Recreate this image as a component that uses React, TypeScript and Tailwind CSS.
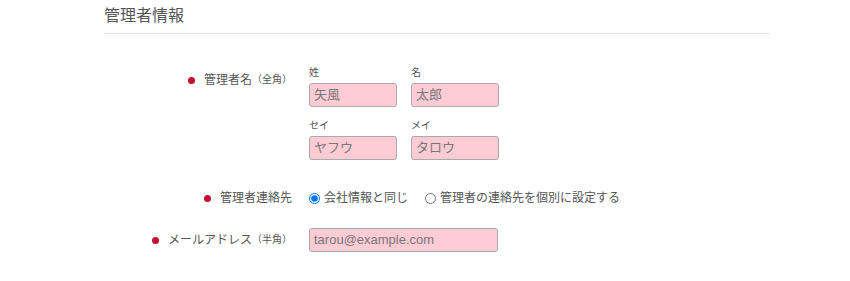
import React from "react";

const jp = "font-['Liberation_Sans','Noto_Sans_CJK_JP',sans-serif]";

const Bullet = () => (
  <span className="inline-block w-[7px] h-[7px] rounded-full bg-[#c8102e] mr-[9px] shrink-0" />
);

const Label = ({ text, note }: { text: string; note?: string }) => (
  <div className="flex items-center justify-end text-[12px] leading-[20px] text-[#555]">
    <Bullet />
    <span>{text}</span>
    {note && <span className="text-[10px] text-[#555]">{note}</span>}
  </div>
);

const Field = ({ sub, value, width = "w-[88px]" }: { sub: string; value: string; width?: string }) => (
  <div className="flex flex-col">
    <span className="text-[10px] leading-[14px] text-[#555] mb-[3px]">{sub}</span>
    <div
      className={`${width} h-[24px] rounded-[3px] border border-[#aaa] bg-[#ffccd5] px-[4px] text-[13px] leading-[22px] text-[#777]`}
    >
      {value}
    </div>
  </div>
);

export default function App() {
  return (
    <div className={`${jp} bg-white w-[850px] h-[281px] pl-[104px] pr-[80px] pt-[4px]`}>
      <h2 className="text-[16px] leading-[24px] text-[#555] pb-[5px] border-b border-[#e0e0e0]">
        管理者情報
      </h2>

      <div className="grid grid-cols-[188px_1fr] gap-x-[17px] mt-[32px]">
        <div className="pt-[4px]">
          <Label text="管理者名" note="（全角）" />
        </div>
        <div className="flex flex-col gap-[12px]">
          <div className="flex gap-[14px]">
            <Field sub="姓" value="矢風" />
            <Field sub="名" value="太郎" />
          </div>
          <div className="flex gap-[14px]">
            <Field sub="セイ" value="ヤフウ" />
            <Field sub="メイ" value="タロウ" />
          </div>
        </div>
      </div>

      <div className="grid grid-cols-[188px_1fr] gap-x-[17px] mt-[28px] items-center">
        <Label text="管理者連絡先" />
        <div className="flex items-center text-[12px] leading-[20px] text-[#555]">
          <label className="flex items-center">
            <input type="radio" name="contact" defaultChecked className="m-0 w-[11px] h-[11px]" />
            <span className="ml-[4px]">会社情報と同じ</span>
          </label>
          <label className="flex items-center ml-[17px]">
            <input type="radio" name="contact" className="m-0 w-[11px] h-[11px]" />
            <span className="ml-[4px]">管理者の連絡先を個別に設定する</span>
          </label>
        </div>
      </div>

      <div className="grid grid-cols-[188px_1fr] gap-x-[17px] mt-[20px] items-center">
        <Label text="メールアドレス" note="（半角）" />
        <div className="w-[189px] h-[24px] rounded-[3px] border border-[#aaa] bg-[#ffccd5] px-[4px] text-[13px] leading-[22px] text-[#777]">
          tarou@example.com
        </div>
      </div>
    </div>
  );
}
